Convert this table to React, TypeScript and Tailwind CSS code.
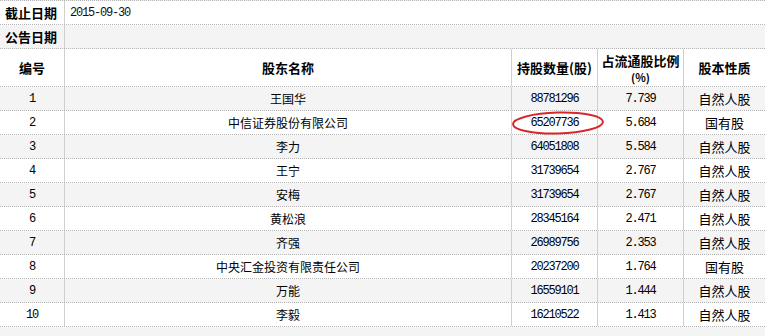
import React from 'react';

interface Holder {
  no: number;
  name: string;
  shares: string;
  ratio: string;
  kind: string;
}

const holders: Holder[] = [
  { no: 1, name: '王国华', shares: '88781296', ratio: '7.739', kind: '自然人股' },
  { no: 2, name: '中信证券股份有限公司', shares: '65207736', ratio: '5.684', kind: '国有股' },
  { no: 3, name: '李力', shares: '64051808', ratio: '5.584', kind: '自然人股' },
  { no: 4, name: '王宁', shares: '31739654', ratio: '2.767', kind: '自然人股' },
  { no: 5, name: '安梅', shares: '31739654', ratio: '2.767', kind: '自然人股' },
  { no: 6, name: '黄松浪', shares: '28345164', ratio: '2.471', kind: '自然人股' },
  { no: 7, name: '齐强', shares: '26989756', ratio: '2.353', kind: '自然人股' },
  { no: 8, name: '中央汇金投资有限责任公司', shares: '20237200', ratio: '1.764', kind: '国有股' },
  { no: 9, name: '万能', shares: '16559101', ratio: '1.444', kind: '自然人股' },
  { no: 10, name: '李毅', shares: '16210522', ratio: '1.413', kind: '自然人股' },
];

const cjk = "font-['Noto_Sans_CJK_SC',sans-serif]";
const mono = "font-['Liberation_Mono','Noto_Sans_CJK_SC',monospace] text-[12px] tracking-[-1.2px]";

const rowLine = 'border-b border-dotted border-[#b5b5b5]';
const colLine = 'border-r border-[#cfcfcf]';

const App: React.FC = () => {
  return (
    <div className={`relative w-[765px] h-[336px] bg-[#f4f4f4] text-black overflow-hidden ${cjk}`}>
      <div className="border-t border-dotted border-[#b5b5b5]">
        {/* 日期 */}
        <div className={`flex h-[24px] bg-white ${rowLine}`}>
          <div className={`w-[65px] shrink-0 flex items-center pl-[5px] text-[13px] font-bold ${colLine}`}>截止日期</div>
          <div className={`flex items-center pl-[5px] ${mono} text-[#111]`}>2015-09-30</div>
        </div>
        <div className={`flex h-[24px] bg-[#f4f4f4] ${rowLine}`}>
          <div className={`w-[65px] shrink-0 flex items-center pl-[5px] text-[13px] font-bold ${colLine}`}>公告日期</div>
          <div className="flex-1" />
        </div>

        {/* 表头 */}
        <div className={`flex h-[38px] bg-white text-[13px] font-bold ${rowLine}`}>
          <div className={`w-[65px] shrink-0 flex items-center justify-center ${colLine}`}>编号</div>
          <div className={`w-[447px] shrink-0 flex items-center justify-center ${colLine}`}>股东名称</div>
          <div className={`w-[86px] shrink-0 flex items-center justify-center whitespace-nowrap ${colLine}`}>持股数量(股)</div>
          <div className={`w-[86px] shrink-0 flex flex-col items-center justify-center ${colLine}`}>
            <span className="leading-[19px]">占流通股比例</span>
            <span className="leading-[15px] text-[11px]">(%)</span>
          </div>
          <div className="flex-1 flex items-center justify-center">股本性质</div>
        </div>

        {holders.map((h) => (
          <div
            key={h.no}
            className={`flex h-[24px] ${h.no % 2 === 1 ? 'bg-[#f4f4f4]' : 'bg-white'} ${rowLine}`}
          >
            <div className={`w-[65px] shrink-0 flex items-center justify-center ${mono} ${colLine}`}>{h.no}</div>
            <div className={`w-[447px] shrink-0 flex items-center justify-center text-[12px] ${colLine}`}>{h.name}</div>
            <div className={`w-[86px] shrink-0 flex items-center justify-center ${mono} ${colLine}`}>{h.shares}</div>
            <div className={`w-[86px] shrink-0 flex items-center justify-center ${mono} ${colLine}`}>{h.ratio}</div>
            <div className="flex-1 flex items-center justify-center text-[13px]">{h.kind}</div>
          </div>
        ))}
      </div>

      {/* 红圈标注 */}
      <svg className="absolute left-[510px] top-[110px]" width="96" height="27" viewBox="0 0 96 27">
        <ellipse cx="48" cy="13" rx="45" ry="10.5" fill="none" stroke="#d8262c" strokeWidth="2" transform="rotate(-1.5 48 13)" />
      </svg>
    </div>
  );
};

export default App;
